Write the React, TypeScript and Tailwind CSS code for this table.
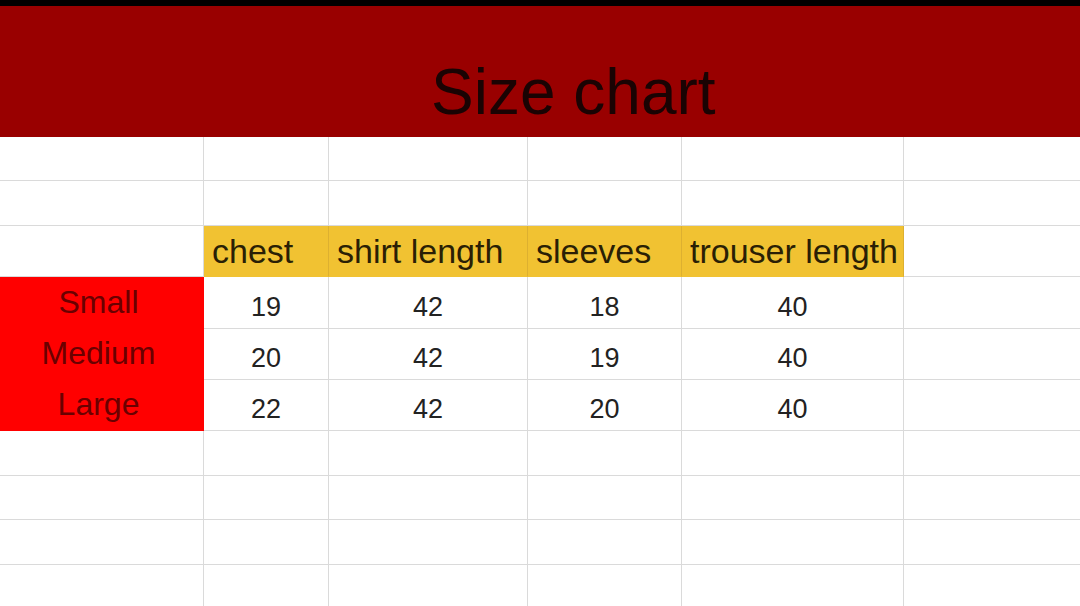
import { Fragment } from "react";

const cols = ["", "chest", "shirt length", "sleeves", "trouser length", ""];

const sizes = [
  { label: "Small", values: ["19", "42", "18", "40"] },
  { label: "Medium", values: ["20", "42", "19", "40"] },
  { label: "Large", values: ["22", "42", "20", "40"] },
];

const line = "border-r border-b border-[#dadada]";
const lastLine = "border-b border-[#dadada]";

function EmptyRow() {
  return (
    <>
      {cols.map((_, i) => (
        <div key={i} className={i === cols.length - 1 ? lastLine : line} />
      ))}
    </>
  );
}

export default function App() {
  return (
    <div
      className="h-[606px] w-[1080px] overflow-hidden bg-white"
      style={{ fontFamily: '"Liberation Sans", Arial, sans-serif' }}
    >
      <div className="h-[6px] bg-black" />
      <div className="h-[131px] bg-[#990000] pl-[431px] pt-[54px]">
        <h1 className="text-[64px] leading-none text-[#1a0303]">Size chart</h1>
      </div>

      <div className="grid grid-cols-[204px_125px_199px_154px_222px_1fr] grid-rows-[44px_45px_51px_52px_51px_51px_45px_44px_45px_45px]">
        <EmptyRow />
        <EmptyRow />

        {/* header row */}
        <div className={line} />
        {cols.slice(1, 5).map((c) => (
          <div
            key={c}
            className="flex items-end border-r border-b border-r-[#ddb030] border-b-[#f1c232] bg-[#f1c232] pb-[8px] pl-[8px] text-[34px] leading-none text-[#2a1f05]"
          >
            {c}
          </div>
        ))}
        <div className={lastLine} />

        {sizes.map((s) => (
          <Fragment key={s.label}>
            <div className="flex items-end justify-center border-r border-b border-transparent bg-[#ff0000] pr-[6px] pb-[10px] text-[32px] leading-none text-[#6a0000]">
              {s.label}
            </div>
            {s.values.map((v, i) => (
              <div
                key={i}
                className={`${line} flex items-end justify-center pb-[7px] text-[27px] leading-none text-[#222]`}
              >
                {v}
              </div>
            ))}
            <div className={lastLine} />
          </Fragment>
        ))}

        <EmptyRow />
        <EmptyRow />
        <EmptyRow />
        <EmptyRow />
      </div>
    </div>
  );
}
